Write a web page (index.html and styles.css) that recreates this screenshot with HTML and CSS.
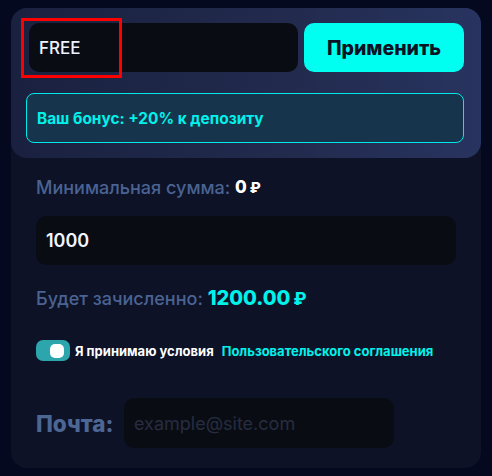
FILE: index.html
```html
<!DOCTYPE html>
<html>
<head>
<meta charset="utf-8">
<link rel="stylesheet" href="styles.css">
</head>
<body>
<div class="card">
  <div class="promo">
    <div class="promo-row">
      <div class="field promo-field">
        <span class="promo-code">FREE</span>
        <div class="highlight"></div>
      </div>
      <button class="apply">Применить</button>
    </div>
    <div class="bonus">Ваш бонус: +20% к депозиту</div>
  </div>
  <div class="body">
    <div class="line min">Минимальная сумма: <b class="white">0<span class="rub">₽</span></b></div>
    <div class="field amount"><span>1000</span></div>
    <div class="line credit">Будет зачисленно: <b class="cyan">1200.00<span class="rub">₽</span></b></div>
    <div class="agree">
      <span class="toggle"><span class="knob"></span></span>
      <span class="agree-text">Я принимаю условия</span>
      <span class="agree-link">Пользовательского соглашения</span>
    </div>
    <div class="mail-row">
      <span class="mail-label">Почта:</span>
      <div class="field mail"><span class="placeholder">example@site.com</span></div>
    </div>
  </div>
</div>
</body>
</html>
```

FILE: styles.css
```css
* { box-sizing: border-box; }
html, body { margin: 0; }
body {
  background: #040920;
  padding: 8px 11px;
  font-family: Inter, "Noto Sans", sans-serif;
  width: 492px;
  height: 476px;
  overflow: hidden;
}
.card {
  width: 470px;
  height: 460px;
  background: #0d1227;
  border-radius: 16px;
}
.promo {
  background: linear-gradient(90deg, #1a2140 0%, #222b4e 60%, #283460 100%);
  border-radius: 16px;
  padding: 15px 17px 15px 15px;
}
.promo-row {
  display: flex;
  gap: 6px;
  padding-left: 3px;
}
.field {
  background: #0a0c14;
  border-radius: 10px;
  display: flex;
  align-items: center;
}
.promo-field {
  position: relative;
  width: 269px;
  height: 49px;
  padding-left: 10px;
}
.promo-code {
  color: #eef2ff;
  font-size: 17px;
  font-weight: 500;
}
.highlight {
  position: absolute;
  left: -8px;
  top: -5px;
  width: 101px;
  height: 60px;
  border: 3px solid #ff0000;
}
.apply {
  width: 160px;
  height: 49px;
  border: none;
  border-radius: 10px;
  background: #00fff0;
  color: #0b1226;
  font-family: inherit;
  font-size: 19.5px;
  font-weight: 800;
  padding: 0;
}
.bonus {
  margin-top: 21px;
  height: 50px;
  border: 1px solid #00e8e8;
  border-radius: 8px;
  background: #16344b;
  color: #00f2ea;
  font-size: 15.4px;
  font-weight: 700;
  display: flex;
  align-items: center;
  padding-left: 10px;
}
.body {
  padding: 18px 25px 0 25px;
}
.line {
  color: #4a6392;
  font-size: 18px;
  font-weight: 500;
  height: 22px;
  display: flex;
  align-items: center;
  white-space: pre;
}
.white { color: #ffffff; font-weight: 800; font-size: 17px; }
.cyan { color: #00f2ea; font-weight: 800; font-size: 20px; }
.rub { margin-left: 3px; font-size: 0.85em; }
.amount {
  margin-top: 18px;
  width: 420px;
  height: 49px;
  padding-left: 10px;
  color: #f2f5ff;
  font-size: 18px;
  font-weight: 600;
}
.credit { margin-top: 22px; }
.agree {
  margin-top: 31px;
  display: flex;
  align-items: center;
  font-size: 13px;
  font-weight: 700;
}
.toggle {
  width: 34px;
  height: 21px;
  border-radius: 7px;
  background: #2ca6ac;
  position: relative;
  display: inline-block;
}
.knob {
  position: absolute;
  right: 6px;
  top: 3.5px;
  width: 14px;
  height: 14px;
  border-radius: 5px;
  background: #ffffff;
}
.agree-text { color: #ffffff; margin-left: 5px; }
.agree-link { color: #00f2ea; margin-left: 8px; }
.mail-row {
  margin-top: 37px;
  display: flex;
  align-items: center;
  gap: 10px;
}
.mail-label {
  color: #4d6795;
  font-size: 22.5px;
  font-weight: 800;
  width: 78px;
}
.mail {
  width: 270px;
  height: 50px;
  padding-left: 10px;
}
.placeholder {
  color: #262d40;
  font-size: 18px;
}
```
